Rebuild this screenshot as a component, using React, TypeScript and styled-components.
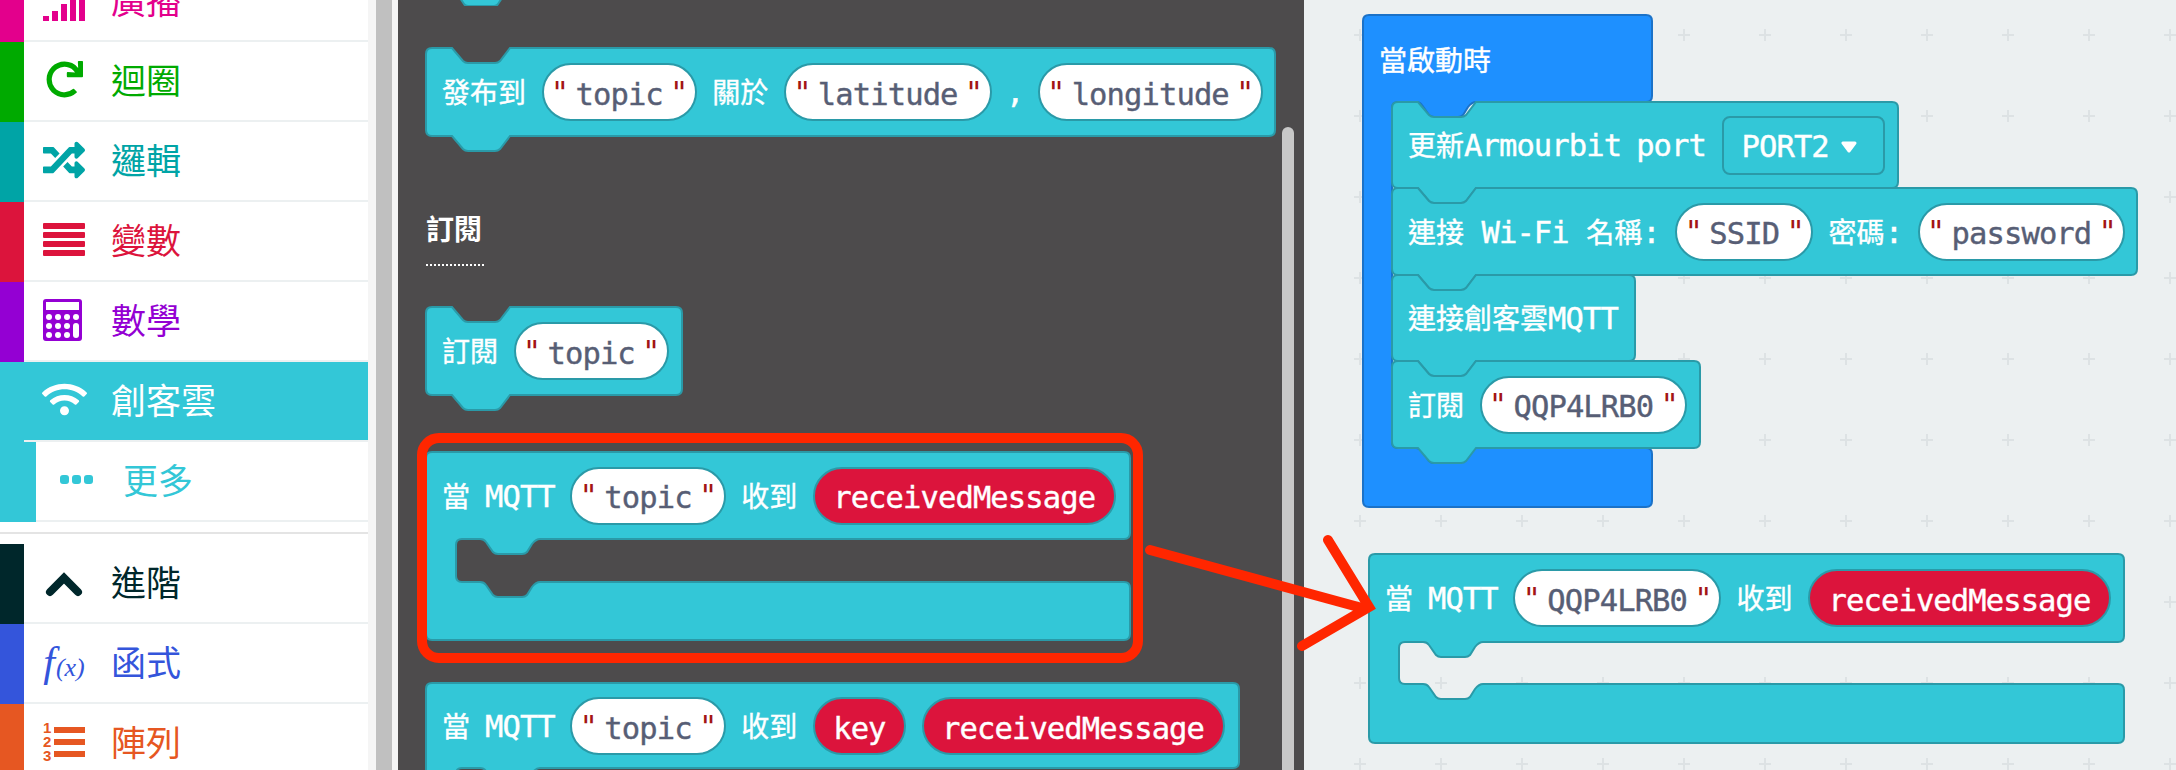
import React from "react";
import styled, { createGlobalStyle } from "styled-components";
import { FaRedo, FaRandom, FaWifi } from "react-icons/fa";

const TEAL = "#33c7d7";
const TEAL_DARK = "#2a9aa8";
const MONO = '"DejaVu Sans Mono", "Noto Sans CJK TC", monospace';
const CJK = '"Noto Sans CJK TC", "Noto Sans", sans-serif';

const Global = createGlobalStyle`
  html, body { margin: 0; padding: 0; background: #ecf0f1; }
  #root { width: 2176px; height: 770px; }
`;

const Page = styled.div`
  position: relative;
  display: flex;
  width: 2176px;
  height: 770px;
  overflow: hidden;
`;

/* ---------- Toolbox ---------- */
const Toolbox = styled.nav`
  width: 368px;
  height: 770px;
  flex: none;
  background: #fff;
  overflow: hidden;
  font-family: ${CJK};
`;
const Categories = styled.div`
  margin-top: -38px;
`;
const Row = styled.div<{ $active?: boolean; $color: string }>`
  display: flex;
  height: 80px;
  color: ${(p) => (p.$active ? "#fff" : p.$color)};
  background: ${(p) => (p.$active ? p.$color : "#fff")};
`;
const Strip = styled.div<{ $color: string; $wide?: boolean }>`
  width: ${(p) => (p.$wide ? 36 : 24)}px;
  flex: none;
  background: ${(p) => p.$color};
`;
const RowBody = styled.div`
  flex: 1;
  display: flex;
  align-items: center;
  border-bottom: 2px solid #ecf0f1;
`;
const IconCell = styled.div`
  width: 80px;
  flex: none;
  display: flex;
  justify-content: center;
  align-items: center;
  padding-bottom: 3px;
`;
const RowLabel = styled.span`
  margin-left: 7px;
  margin-bottom: 6px;
  font-size: 35px;
  line-height: 1;
`;
const Divider = styled.div`
  margin: 10px 0;
  height: 2px;
  background: #e4e4e4;
`;
const FxIcon = styled.span`
  font-family: "Liberation Serif", serif;
  font-style: italic;
  font-size: 42px;
  line-height: 1;
  white-space: nowrap;
  & > small {
    font-size: 26px;
    margin-left: 1px;
  }
`;

const Gutter = styled.div`
  width: 30px;
  flex: none;
  padding-left: 8px;
  box-sizing: border-box;
  background: #f5f5f5;
`;
const GutterThumb = styled.div`
  width: 16px;
  height: 100%;
  background: #c0c0c0;
`;

/* ---------- Blocks ---------- */
type Mouth = { x: number; y1: number; y2: number };
function shapePath(w: number, h: number, notch: boolean, tab: boolean, mouth?: Mouth) {
  const r = 6;
  let d = `M0 ${r} Q0 0 ${r} 0 `;
  if (notch) {
    d += `L26 0 L37 13 Q39 15 42 15 L69 15 Q72 15 74 13 L84 0 `;
  }
  d += `L${w - r} 0 Q${w} 0 ${w} ${r} `;
  if (mouth) {
    const { x, y1, y2 } = mouth;
    d += `L${w} ${y1 - r} Q${w} ${y1} ${w - r} ${y1} `;
    d += `L${x + 84} ${y1} Q${x + 80} ${y1} ${x + 76} ${y1 + 5} L${x + 71} ${y1 + 13} Q${x + 69} ${y1 + 15} ${x + 66} ${y1 + 15} `;
    d += `L${x + 42} ${y1 + 15} Q${x + 39} ${y1 + 15} ${x + 37} ${y1 + 13} L${x + 30} ${y1 + 3} Q${x + 28} ${y1} ${x + 24} ${y1} `;
    d += `L${x + r} ${y1} Q${x} ${y1} ${x} ${y1 + r} L${x} ${y2 - r} Q${x} ${y2} ${x + r} ${y2} `;
    d += `L${x + 24} ${y2} Q${x + 28} ${y2} ${x + 30} ${y2 + 3} L${x + 37} ${y2 + 13} Q${x + 39} ${y2 + 15} ${x + 42} ${y2 + 15} `;
    d += `L${x + 66} ${y2 + 15} Q${x + 69} ${y2 + 15} ${x + 71} ${y2 + 13} L${x + 76} ${y2 + 5} Q${x + 80} ${y2} ${x + 84} ${y2} `;
    d += `L${w - r} ${y2} Q${w} ${y2} ${w} ${y2 + r} `;
  }
  d += `L${w} ${h - r} Q${w} ${h} ${w - r} ${h} `;
  if (tab) {
    d += `L84 ${h} L74 ${h + 13} Q72 ${h + 15} 69 ${h + 15} L42 ${h + 15} Q39 ${h + 15} 37 ${h + 13} L26 ${h} `;
  }
  d += `L${r} ${h} Q0 ${h} 0 ${h - r} Z`;
  return d;
}

const BlockRoot = styled.div<{ $w: number; $h: number; $top?: number }>`
  position: relative;
  width: ${(p) => p.$w}px;
  height: ${(p) => p.$h}px;
  margin-top: ${(p) => p.$top ?? 0}px;
  flex: none;
`;
const BlockShape = styled.svg`
  position: absolute;
  left: 0;
  top: 0;
  overflow: visible;
`;
const BlockRow = styled.div<{ $h: number }>`
  position: relative;
  display: flex;
  align-items: center;
  gap: 15.5px;
  height: ${(p) => p.$h}px;
  padding-left: 16px;
`;

function Block(props: {
  w: number;
  h: number;
  rowH?: number;
  top?: number;
  flat?: boolean;
  tab?: boolean;
  mouth?: Mouth;
  children?: React.ReactNode;
}) {
  const { w, h, rowH, top, flat, tab, mouth, children } = props;
  return (
    <BlockRoot $w={w} $h={h} $top={top}>
      <BlockShape width={w} height={h}>
        <path d={shapePath(w, h, !flat, !!tab, mouth)} fill={TEAL} stroke={TEAL_DARK} strokeWidth={2} />
      </BlockShape>
      <BlockRow $h={rowH ?? h}>{children}</BlockRow>
    </BlockRoot>
  );
}

const LabelText = styled.span<{ $tight?: boolean }>`
  font-family: ${MONO};
  font-size: 30.5px;
  letter-spacing: -0.9px;
  word-spacing: ${(p) => (p.$tight ? -2.5 : 0)}px;
  -webkit-text-stroke: 0.4px #fff;
  color: #fff;
  white-space: pre;
  flex: none;
  line-height: 1;
  margin-top: 2px;
`;
const Comma = styled(LabelText)`
  margin-left: -1.2px;
  margin-right: -1.2px;
`;
const Han = styled.span`
  font-family: ${CJK};
  font-size: 28px;
  letter-spacing: 0;
`;
function Label({ text, tight }: { text: string; tight?: boolean }) {
  const parts = text.split(/([\u4e00-\u9fff]+)/).filter(Boolean);
  return (
    <LabelText $tight={tight}>
      {parts.map((p, i) => (/[\u4e00-\u9fff]/.test(p) ? <Han key={i}>{p}</Han> : <React.Fragment key={i}>{p}</React.Fragment>))}
    </LabelText>
  );
}

const PillBox = styled.span`
  display: inline-flex;
  align-items: center;
  flex: none;
  height: 58px;
  box-sizing: border-box;
  padding-top: 4px;
  border: 2px solid ${TEAL_DARK};
  border-radius: 29px;
  background: #fff;
  color: #575e75;
  font-family: ${MONO};
  font-size: 30.5px;
  letter-spacing: -0.9px;
  -webkit-text-stroke: 0.4px currentColor;
  white-space: pre;
`;
const Quote = styled.span`
  width: 32px;
  margin-top: -4px;
  text-align: center;
  color: #a31515;
  -webkit-text-stroke: 0;
`;
function Pill({ text }: { text: string }) {
  return (
    <PillBox>
      <Quote>"</Quote>
      {text}
      <Quote>"</Quote>
    </PillBox>
  );
}
const VarPill = styled(PillBox)`
  background: #dc143c;
  color: #fff;
  padding-left: 18.5px;
  padding-right: 18.5px;
`;
const Dropdown = styled.span`
  display: inline-flex;
  align-items: center;
  flex: none;
  gap: 12px;
  height: 59px;
  width: 163px;
  box-sizing: border-box;
  padding: 3px 0 0 18px;
  border: 2px solid ${TEAL_DARK};
  border-radius: 8px;
  color: #fff;
  font-family: ${MONO};
  font-size: 30.5px;
  letter-spacing: -0.9px;
  -webkit-text-stroke: 0.4px #fff;
`;

/* ---------- Flyout ---------- */
const Flyout = styled.section`
  position: relative;
  width: 906px;
  height: 770px;
  flex: none;
  padding-left: 28px;
  box-sizing: border-box;
  background: #4d4b4c;
  overflow: hidden;
`;
const Stub = styled.svg`
  display: block;
  margin-left: 34px;
`;
const Heading = styled.h3`
  width: 58px;
  margin: 78px 0 0;
  padding-bottom: 21px;
  height: 29px;
  font-family: ${CJK};
  font-size: 28px;
  font-weight: 700;
  line-height: 29px;
  color: #fff;
  border-bottom: 2px dotted #fff;
  white-space: nowrap;
`;
const FlyoutThumb = styled.div`
  position: absolute;
  left: 884px;
  top: 127px;
  bottom: 0;
  width: 12px;
  border-radius: 6px 6px 0 0;
  background: #c8c8c8;
`;

/* ---------- Workspace ---------- */
const Workspace = styled.main`
  position: relative;
  flex: 1;
  height: 770px;
  background: #ecf0f1;
  overflow: hidden;
`;
const GridDots = styled.svg`
  position: absolute;
  inset: 0;
`;
const Hat = styled.div`
  position: absolute;
  left: 59px;
  top: 15px;
  width: 289px;
  height: 492px;
`;
const HatTitle = styled.div`
  position: relative;
  height: 87px;
  padding-left: 16px;
  display: flex;
  align-items: center;
  font-family: ${CJK};
  font-size: 28px;
  color: #fff;
  -webkit-text-stroke: 0.4px #fff;
`;
const HatStack = styled.div`
  position: relative;
  margin-left: 29px;
`;
const Placed = styled.div`
  position: absolute;
  left: 65px;
  top: 554px;
`;

/* ---------- Annotations ---------- */
const Highlight = styled.div`
  position: absolute;
  left: 417px;
  top: 433px;
  width: 726px;
  height: 230px;
  box-sizing: border-box;
  border: 10px solid #ff2600;
  border-radius: 22px;
`;
const ArrowLayer = styled.svg`
  position: absolute;
  inset: 0;
  pointer-events: none;
`;

/* ---------- Icons ---------- */
const SignalIcon = () => (
  <svg width="42" height="34" viewBox="0 0 42 34" fill="currentColor" style={{ marginTop: 8 }}>
    <rect x="0" y="29" width="6" height="5" />
    <rect x="9" y="24" width="6" height="10" />
    <rect x="18" y="17" width="6" height="17" />
    <rect x="27" y="9" width="6" height="25" />
    <rect x="36" y="0" width="6" height="34" />
  </svg>
);
const BarsIcon = () => (
  <svg width="42" height="33" viewBox="0 0 42 33" fill="currentColor">
    <rect y="0" width="42" height="6" rx="1" />
    <rect y="9" width="42" height="6" rx="1" />
    <rect y="18" width="42" height="6" rx="1" />
    <rect y="27" width="42" height="6" rx="1" />
  </svg>
);
const CalcIcon = () => {
  const dots: React.ReactNode[] = [];
  [18, 27, 36].forEach((y) =>
    [6, 15, 24].forEach((x) => dots.push(<circle key={`${x}-${y}`} cx={x} cy={y} r="3" fill="#fff" />))
  );
  return (
    <svg width="39" height="42" viewBox="0 0 39 42" style={{ marginLeft: -3 }}>
      <rect width="39" height="42" rx="3" fill="currentColor" />
      <rect x="3" y="3" width="33" height="8" fill="#fff" />
      {dots}
      <circle cx="33" cy="18" r="3" fill="#fff" />
      <rect x="30" y="24" width="6" height="15" rx="3" fill="#fff" />
    </svg>
  );
};
const DotsIcon = () => (
  <svg width="33" height="9" viewBox="0 0 33 9" fill="currentColor">
    <rect x="0" width="9" height="9" rx="3" />
    <rect x="12" width="9" height="9" rx="3" />
    <rect x="24" width="9" height="9" rx="3" />
  </svg>
);
const ChevronIcon = () => (
  <svg width="38" height="25" viewBox="0 0 38 25" style={{ marginTop: 6 }}>
    <path d="M5 20 L19 6 L33 20" fill="none" stroke="currentColor" strokeWidth="8" strokeLinecap="round" />
  </svg>
);
const ListIcon = () => (
  <svg width="42" height="42" viewBox="0 0 42 42" fill="currentColor" style={{ marginTop: -2 }}>
    <text x="0" y="13" fontSize="15" fontWeight="700" fontFamily="Liberation Sans, sans-serif">1</text>
    <text x="0" y="27" fontSize="15" fontWeight="700" fontFamily="Liberation Sans, sans-serif">2</text>
    <text x="0" y="41" fontSize="15" fontWeight="700" fontFamily="Liberation Sans, sans-serif">3</text>
    <rect x="11" y="7" width="31" height="6" />
    <rect x="11" y="19" width="31" height="6" />
    <rect x="11" y="31" width="31" height="6" />
  </svg>
);

function Category(props: { color: string; label: string; icon: React.ReactNode; active?: boolean }) {
  const { color, label, icon, active } = props;
  return (
    <Row $color={color} $active={active}>
      <Strip $color={color} />
      <RowBody>
        <IconCell>{icon}</IconCell>
        <RowLabel>{label}</RowLabel>
      </RowBody>
    </Row>
  );
}

export default function App() {
  return (
    <Page>
      <Global />
      <Toolbox>
        <Categories>
          <Category color="#e3008c" label="廣播" icon={<SignalIcon />} />
          <Category color="#00aa00" label="迴圈" icon={<FaRedo size={37} />} />
          <Category color="#00a4a6" label="邏輯" icon={<FaRandom size={42} />} />
          <Category color="#dc143c" label="變數" icon={<BarsIcon />} />
          <Category color="#9400d3" label="數學" icon={<CalcIcon />} />
          <Category color={TEAL} label="創客雲" active icon={<FaWifi size={45} />} />
          <Row $color={TEAL}>
            <Strip $color={TEAL} $wide />
            <RowBody>
              <IconCell>
                <DotsIcon />
              </IconCell>
              <RowLabel>更多</RowLabel>
            </RowBody>
          </Row>
          <Divider />
          <Category color="#00272b" label="進階" icon={<ChevronIcon />} />
          <Category
            color="#3455db"
            label="函式"
            icon={
              <FxIcon>
                f<small>(x)</small>
              </FxIcon>
            }
          />
          <Category color="#e65722" label="陣列" icon={<ListIcon />} />
        </Categories>
      </Toolbox>
      <Gutter>
        <GutterThumb />
      </Gutter>
      <Flyout>
        <Stub width="60" height="6" viewBox="0 0 60 6">
          <path d="M0 -2 L4 4 Q5 6 8 6 L34 6 Q37 6 38 4 L42 -2 Z" fill={TEAL} stroke={TEAL_DARK} strokeWidth="2" />
        </Stub>
        <Block w={849} h={88} top={42} tab>
          <Label text="發布到" />
          <Pill text="topic" />
          <Label text="關於" />
          <Pill text="latitude" />
          <Comma>,</Comma>
          <Pill text="longitude" />
        </Block>
        <Heading>訂閱</Heading>
        <Block w={256} h={88} top={41} tab>
          <Label text="訂閱" />
          <Pill text="topic" />
        </Block>
        <Block w={704} h={188} rowH={87} top={57} flat mouth={{ x: 30, y1: 87, y2: 130 }}>
          <Label text="當 MQTT" tight />
          <Pill text="topic" />
          <Label text="收到" />
          <VarPill>receivedMessage</VarPill>
        </Block>
        <Block w={813} h={188} rowH={86} top={43} flat mouth={{ x: 30, y1: 85, y2: 130 }}>
          <Label text="當 MQTT" tight />
          <Pill text="topic" />
          <Label text="收到" />
          <VarPill>key</VarPill>
          <VarPill>receivedMessage</VarPill>
        </Block>
        <FlyoutThumb />
      </Flyout>
      <Workspace>
        <GridDots width="872" height="770">
          <defs>
            <pattern id="plus" x="50" y="29" width="81" height="81" patternUnits="userSpaceOnUse">
              <path d="M0 6 H12 M6 0 V12" stroke="#dde2e4" strokeWidth="2" />
            </pattern>
          </defs>
          <rect width="872" height="770" fill="url(#plus)" />
        </GridDots>
        <Hat>
          <BlockShape width={289} height={492}>
            <path
              d={shapePath(289, 492, false, false, { x: 29, y1: 87, y2: 433 })}
              fill="#1e90ff"
              stroke="#1b72c8"
              strokeWidth={2}
            />
          </BlockShape>
          <HatTitle>當啟動時</HatTitle>
          <HatStack>
            <Block w={506} h={86} tab>
              <Label text="更新Armourbit port" tight />
              <Dropdown>
                PORT2
                <svg width="16" height="12" viewBox="0 0 16 12">
                  <path d="M2 2 H14 L8 10 Z" fill="#fff" stroke="#fff" strokeWidth="3" strokeLinejoin="round" />
                </svg>
              </Dropdown>
            </Block>
            <Block w={745} h={87} tab>
              <Label text="連接 Wi-Fi 名稱:" />
              <Pill text="SSID" />
              <Label text="密碼:" />
              <Pill text="password" />
            </Block>
            <Block w={243} h={86} tab>
              <Label text="連接創客雲MQTT" />
            </Block>
            <Block w={308} h={87} tab>
              <Label text="訂閱" />
              <Pill text="QQP4LRB0" />
            </Block>
          </HatStack>
        </Hat>
        <Placed>
          <Block w={755} h={189} rowH={88} flat mouth={{ x: 30, y1: 88, y2: 130 }}>
            <Label text="當 MQTT" tight />
            <Pill text="QQP4LRB0" />
            <Label text="收到" />
            <VarPill>receivedMessage</VarPill>
          </Block>
        </Placed>
      </Workspace>
      <Highlight />
      <ArrowLayer width="2176" height="770">
        <path
          d="M1150 550 L1362 608 M1328 540 L1369 607 L1302 646"
          fill="none"
          stroke="#ff2600"
          strokeWidth="10"
          strokeLinecap="round"
          strokeLinejoin="miter"
        />
      </ArrowLayer>
    </Page>
  );
}
